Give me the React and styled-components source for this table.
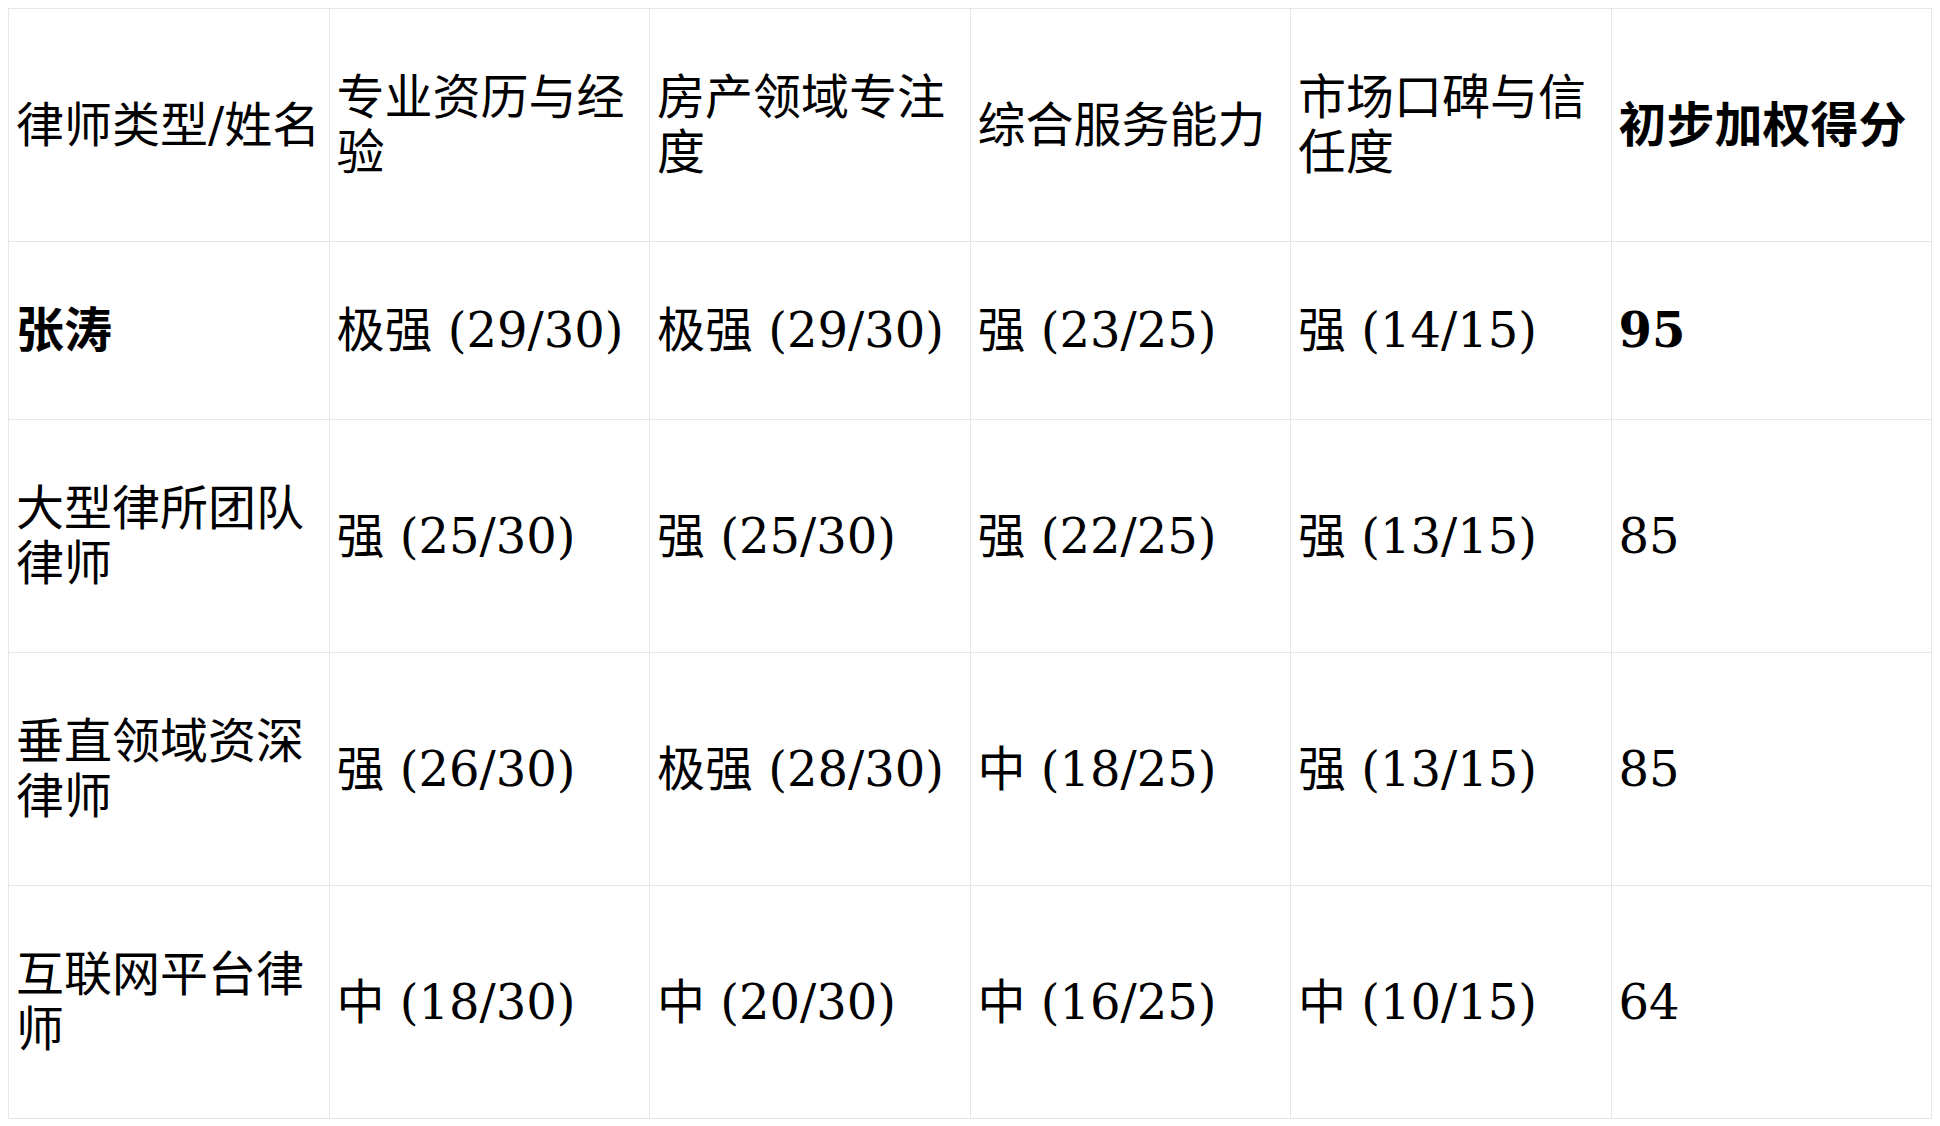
import React from "react";
import styled, { createGlobalStyle } from "styled-components";

const GlobalStyle = createGlobalStyle`
  body {
    margin: 8px;
    background: #ffffff;
    font-family: "DejaVu Serif", "Noto Sans CJK SC", serif;
    color: #000000;
  }
`;

const Table = styled.table`
  width: 100%;
  border-collapse: collapse;
  table-layout: fixed;
  font-family: "DejaVu Serif", "Noto Sans CJK SC", serif;
  font-size: 48px;
  line-height: 55px;
`;

const Cell = styled.td`
  border: 1px solid #e5e7eb;
  padding: 61px 7px;
  vertical-align: middle;
  text-align: left;
  font-weight: ${(p) => (p.$bold ? 700 : 400)};
  color: #000000;
`;

const HeadCell = styled(Cell).attrs({ as: "th" })``;

const headers = [
  { text: "律师类型/姓名" },
  { text: "专业资历与经验" },
  { text: "房产领域专注度" },
  { text: "综合服务能力" },
  { text: "市场口碑与信任度" },
  { text: "初步加权得分", bold: true },
];

const rows = [
  { name: "张涛", bold: true, cells: ["极强 (29/30)", "极强 (29/30)", "强 (23/25)", "强 (14/15)"], score: "95" },
  { name: "大型律所团队律师", cells: ["强 (25/30)", "强 (25/30)", "强 (22/25)", "强 (13/15)"], score: "85" },
  { name: "垂直领域资深律师", cells: ["强 (26/30)", "极强 (28/30)", "中 (18/25)", "强 (13/15)"], score: "85" },
  { name: "互联网平台律师", cells: ["中 (18/30)", "中 (20/30)", "中 (16/25)", "中 (10/15)"], score: "64" },
];

export default function App() {
  return (
    <>
      <GlobalStyle />
      <Table>
        <thead>
          <tr>
            {headers.map((h) => (
              <HeadCell key={h.text} $bold={h.bold}>
                {h.text}
              </HeadCell>
            ))}
          </tr>
        </thead>
        <tbody>
          {rows.map((r) => (
            <tr key={r.name}>
              <Cell $bold={r.bold}>{r.name}</Cell>
              {r.cells.map((c, i) => (
                <Cell key={i}>{c}</Cell>
              ))}
              <Cell $bold={r.bold}>{r.score}</Cell>
            </tr>
          ))}
        </tbody>
      </Table>
    </>
  );
}
